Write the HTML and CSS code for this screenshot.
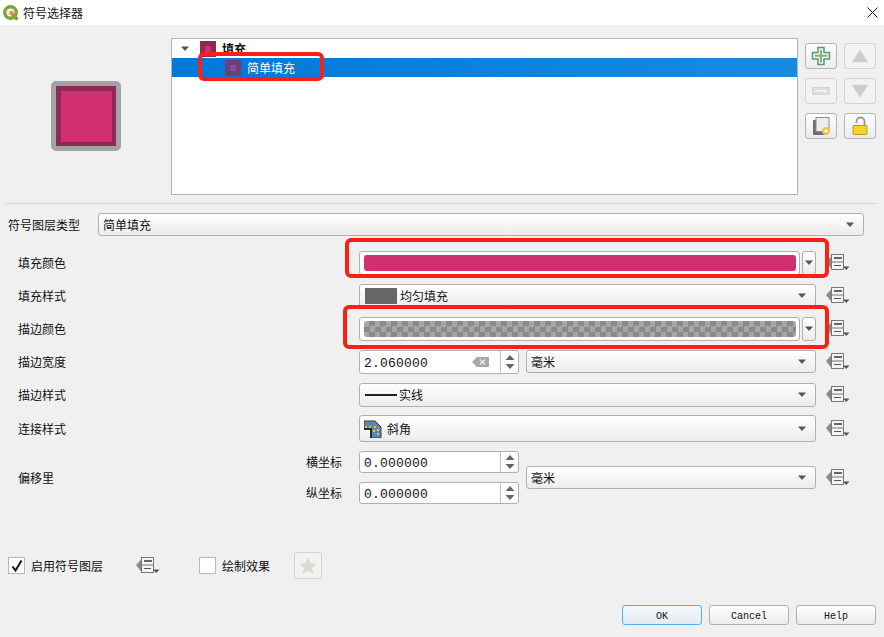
FILE: index.html
```html
<!DOCTYPE html>
<html lang="zh-CN">
<head>
<meta charset="utf-8">
<title>符号选择器</title>
<link rel="stylesheet" href="styles.css">
</head>
<body>
<svg class="defs" width="0" height="0">
  <defs>
    <symbol id="dd" viewBox="0 0 24 18">
      <path d="M0 8l5.500-6v13z" fill="#8a8a8a"/>
      <rect x="5.500" y="0.500" width="12" height="15" fill="#f4f4f4" stroke="#777"/>
      <rect x="8" y="3" width="8" height="2" fill="#666"/>
      <rect x="6" y="7.500" width="11" height="1" fill="#777"/>
      <rect x="8" y="11" width="7" height="1" fill="#555"/>
      <path d="M17 12.500h6.500l-3.250 3.500z" fill="#555"/>
    </symbol>
    <symbol id="arrow" viewBox="0 0 10 6">
      <path d="M1 0.500h8L5 5z" fill="#555"/>
    </symbol>
    <symbol id="spin" viewBox="0 0 10 16">
      <path d="M0.500 6 5 1l4.500 5z" fill="#666"/>
      <path d="M0.500 10h9L5 15z" fill="#666"/>
    </symbol>
    <symbol id="swatch" viewBox="0 0 16 16">
      <rect width="16" height="16" fill="currentColor"/>
      <rect x="5" y="5" width="6" height="6" fill="var(--core)"/>
    </symbol>
  </defs>
</svg>

<header class="titlebar">
  <svg class="qgis" width="18" height="18" viewBox="0 0 18 18">
    <circle cx="8.500" cy="8.500" r="5.800" fill="#f4f6e8" stroke="#7ea33a" stroke-width="3.400"/>
    <path d="M10.500 10.500l5 5" stroke="#7ea33a" stroke-width="3.400"/>
    <circle cx="9.500" cy="9" r="2.200" fill="#e88a3c"/>
  </svg>
  <span class="title">符号选择器</span>
  <svg class="close" width="11" height="11" viewBox="0 0 11 11"><path d="M0.500 0.500l10 10M10.500 0.500l-10 10" stroke="#111"/></svg>
</header>

<main class="dialog">
  <section class="top">
    <div class="preview"><div class="preview-symbol"><div class="preview-fill"></div></div></div>
    <div class="tree">
      <div class="tree-row">
        <svg class="twisty" width="10" height="6"><use href="#arrow"/></svg>
        <svg class="sw sw-root" width="16" height="16"><use href="#swatch"/></svg>
        <span class="bold">填充</span>
      </div>
      <div class="tree-row selected">
        <svg class="sw sw-child" width="16" height="16"><use href="#swatch"/></svg>
        <span>简单填充</span>
      </div>
    </div>
    <div class="side">
      <button class="tool">
        <svg width="20" height="20" viewBox="0 0 20 20"><path d="M7 1.500h6v5h5.500v6.500H13v5.500H7V13H1.500V6.500H7z" fill="#eef5ee" stroke="#5f9a68" stroke-width="1.500"/><path d="M10 4v12.500M4 9.750h12.500" stroke="#7fb086" stroke-width="2"/></svg>
      </button>
      <button class="tool off">
        <svg width="20" height="16" viewBox="0 0 20 16"><path d="M10 2l8 12H2z" fill="#c9ccce" stroke="#d8dadb"/></svg>
      </button>
      <button class="tool off">
        <svg width="20" height="10" viewBox="0 0 20 10"><rect x="1.500" y="1.500" width="17" height="7" fill="#e2dcdc" stroke="#d6d2d2"/><rect x="4" y="4" width="12" height="2" fill="#f2efef"/></svg>
      </button>
      <button class="tool off">
        <svg width="20" height="16" viewBox="0 0 20 16"><path d="M10 14L2 2h16z" fill="#c9ccce" stroke="#d8dadb"/></svg>
      </button>
      <button class="tool">
        <svg width="20" height="20" viewBox="0 0 20 20"><path d="M2 4v15h14V4z" fill="#6e6e6e"/><rect x="5" y="1.500" width="13" height="14" fill="#ededed" stroke="#8c8c8c"/><circle cx="15" cy="15" r="4" fill="#e9c84a"/><circle cx="15" cy="15" r="1.400" fill="#fff"/></svg>
      </button>
      <button class="tool">
        <svg width="20" height="20" viewBox="0 0 20 20"><path d="M6.500 7V5.500a4 4 0 0 1 8 0V10" fill="none" stroke="#999" stroke-width="1.800"/><rect x="3" y="9.500" width="14" height="9" rx="1" fill="#f5d327" stroke="#b59a18"/></svg>
      </button>
    </div>
  </section>

  <hr class="sep">

  <div class="type-row">
    <label class="type-label">符号图层类型</label>
    <div class="combo type-combo"><span>简单填充</span><svg class="caret" width="10" height="6"><use href="#arrow"/></svg></div>
  </div>

  <div class="form">
    <div class="row h24">
      <label>填充颜色</label>
      <div class="field color-field">
        <div class="color-btn"><div class="color-bar solid"></div></div>
        <div class="color-drop"><svg width="10" height="6"><use href="#arrow"/></svg></div>
      </div>
      <svg class="ddb" width="24" height="18"><use href="#dd"/></svg>
    </div>
    <div class="row h24">
      <label>填充样式</label>
      <div class="field combo">
        <span class="fill-swatch"></span><span>均匀填充</span>
        <svg class="caret" width="10" height="6"><use href="#arrow"/></svg>
      </div>
      <svg class="ddb" width="24" height="18"><use href="#dd"/></svg>
    </div>
    <div class="row h24">
      <label>描边颜色</label>
      <div class="field color-field">
        <div class="color-btn"><div class="color-bar checker"></div></div>
        <div class="color-drop"><svg width="10" height="6"><use href="#arrow"/></svg></div>
      </div>
      <svg class="ddb" width="24" height="18"><use href="#dd"/></svg>
    </div>
    <div class="row h24">
      <label>描边宽度</label>
      <div class="field split">
        <div class="spinbox">
          <span class="num">2.060000</span>
          <svg class="clear" width="17" height="12" viewBox="0 0 17 12"><path d="M0 6l4-4V1h13v10H4V10z" fill="#a8a8a8"/><path d="M8 3.500l5 5M13 3.500l-5 5" stroke="#ececec" stroke-width="1.300"/></svg>
          <span class="spin-btn"><svg width="10" height="16"><use href="#spin"/></svg></span>
        </div>
        <div class="combo unit"><span>毫米</span><svg class="caret" width="10" height="6"><use href="#arrow"/></svg></div>
      </div>
      <svg class="ddb" width="24" height="18"><use href="#dd"/></svg>
    </div>
    <div class="row h24">
      <label>描边样式</label>
      <div class="field combo">
        <span class="line-sample"></span><span>实线</span>
        <svg class="caret" width="10" height="6"><use href="#arrow"/></svg>
      </div>
      <svg class="ddb" width="24" height="18"><use href="#dd"/></svg>
    </div>
    <div class="row h27">
      <label>连接样式</label>
      <div class="field combo">
        <svg class="join-icon" width="18" height="18" viewBox="0 0 18 18"><path d="M0 1h11l6 6v11H7V9H0z" fill="#5f86ad" stroke="#2c3c4c"/><path d="M0 9h7v9" fill="none" stroke="#111" stroke-width="1.500"/><path d="M1 6h2v2H1zM5 6h2v2H5zM10 6h2v2h-2zM13 9h2v2h-2zM13 13h2v2h-2zM9 10h2v2H9z" fill="#e2c63a"/></svg>
        <span>斜角</span>
        <svg class="caret" width="10" height="6"><use href="#arrow"/></svg>
      </div>
      <svg class="ddb" width="24" height="18"><use href="#dd"/></svg>
    </div>
    <div class="row offset">
      <label>偏移里</label>
      <div class="offset-labels"><span>横坐标</span><span>纵坐标</span></div>
      <div class="field split center">
        <div class="offset-spins">
          <div class="spinbox short"><span class="num">0.000000</span><span class="spin-btn"><svg width="10" height="16"><use href="#spin"/></svg></span></div>
          <div class="spinbox short"><span class="num">0.000000</span><span class="spin-btn"><svg width="10" height="16"><use href="#spin"/></svg></span></div>
        </div>
        <div class="combo unit"><span>毫米</span><svg class="caret" width="10" height="6"><use href="#arrow"/></svg></div>
      </div>
      <svg class="ddb" width="24" height="18"><use href="#dd"/></svg>
    </div>
  </div>

  <div class="enable-row">
    <span class="check"><svg width="14" height="14" viewBox="0 0 14 14"><path d="M2.500 7.500l3 4 6-10" fill="none" stroke="#111" stroke-width="2"/></svg></span>
    <span class="enable-text">启用符号图层</span>
    <svg class="ddb-inline" width="24" height="18"><use href="#dd"/></svg>
    <span class="check"></span>
    <span class="effect-text">绘制效果</span>
    <button class="star-btn"><svg width="20" height="20" viewBox="0 0 20 20"><path d="M10 1.500l2.600 5.600 6 .7-4.500 4.100 1.200 6-5.300-3-5.300 3 1.200-6L1.400 7.800l6-.7z" fill="#dcdad2"/></svg></button>
  </div>

  <footer class="buttons">
    <button class="btn primary">OK</button>
    <button class="btn">Cancel</button>
    <button class="btn">Help</button>
  </footer>
</main>

<div class="mark mark-tree"></div>
<div class="mark mark-fill"></div>
<div class="mark mark-stroke"></div>
</body>
</html>
```

FILE: styles.css
```css
* { box-sizing: border-box; }
html, body { margin: 0; padding: 0; }
body {
  width: 884px;
  height: 637px;
  overflow: hidden;
  position: relative;
  background: #f0f0f0;
  color: #111;
  font-family: "Noto Sans CJK SC", "Liberation Sans", sans-serif;
  font-size: 12px;
  line-height: 16px;
}
.defs { position: absolute; }

/* title bar */
.titlebar {
  height: 25px;
  background: #fff;
  display: flex;
  align-items: center;
  padding-left: 2px;
}
.qgis { flex: none; }
.title { margin-left: 3px; font-size: 12px; }
.close { margin-left: auto; margin-right: 6px; }

/* top area */
.top {
  display: flex;
  padding-top: 13px;
  height: 170px;
}
.preview {
  width: 171px;
  height: 156px;
  padding: 43px 0 0 51px;
  flex: none;
}
.preview-symbol {
  width: 70px;
  height: 70px;
  border: 5px solid #a3a3a3;
  border-radius: 5px;
  background: #8f2a58;
  display: flex;
  align-items: center;
  justify-content: center;
}
.preview-fill { width: 51px; height: 51px; background: #d03072; }
.tree {
  width: 627px;
  height: 157px;
  background: #fff;
  border: 1px solid #b4b4b4;
  flex: none;
}
.tree-row {
  height: 19px;
  display: flex;
  align-items: center;
  position: relative;
  padding-left: 28px;
}
.twisty { position: absolute; left: 8px; top: 7px; }
.sw { flex: none; margin-right: 6px; }
.sw-root { color: #8f2a58; --core: #d03072; }
.sw-child { color: #6b3f7d; --core: #8b4a97; margin-left: 25px; }
.bold { font-weight: 700; }
.selected { background: linear-gradient(90deg, #0078d7, #1a8ae0); color: #fff; }
.side {
  display: grid;
  grid-template-columns: 32px 32px;
  grid-auto-rows: 26px;
  gap: 9px 7px;
  margin: 5px 0 0 7px;
}
.tool {
  padding: 0;
  display: flex;
  align-items: center;
  justify-content: center;
  border: 1px solid #b4b4b4;
  border-radius: 3px;
  background: linear-gradient(#fdfdfd, #ececec);
}
.tool.off { border-color: #d4d4d4; background: #f3f3f3; }

.sep { margin: 8px 6px 0 6px; border: 0; border-top: 1px solid #d8d8d8; height: 1px; }

/* symbol layer type */
.type-row {
  display: flex;
  align-items: center;
  height: 23px;
  margin-top: 9px;
  padding-left: 8px;
}
.type-label { width: 90px; }
.combo {
  display: flex;
  align-items: center;
  height: 100%;
  background: linear-gradient(#ffffff, #ececec);
  border: 1px solid #b0b0b0;
  border-radius: 3px;
  padding-left: 4px;
  position: relative;
}
.type-combo { width: 766px; }
.caret { position: absolute; right: 8px; top: 50%; margin-top: -3px; }

/* form */
.form {
  margin-top: 15px;
  padding-left: 18px;
  display: flex;
  flex-direction: column;
  gap: 9px;
}
.row { display: flex; align-items: center; }
.row > label { width: 341px; flex: none; }
.h24 { height: 24px; }
.h27 { height: 27px; margin-top: -1px; }
.field { width: 457px; height: 100%; flex: none; }
.ddb { margin-left: 10px; flex: none; }
.color-field { display: flex; gap: 2px; }
.color-btn {
  width: 441px;
  background: #fff;
  border: 1px solid #b0b0b0;
  border-radius: 3px;
  padding: 3px 3px 3px 4px;
}
.color-bar { height: 100%; border-radius: 3px; }
.solid { background: #d03072; }
.checker {
  background: conic-gradient(#8a8a8a 25%, #a6a6a6 0 50%, #8a8a8a 0 75%, #a6a6a6 0) 0 0 / 11px 11px;
}
.color-drop {
  width: 14px;
  background: linear-gradient(#fff, #ececec);
  border: 1px solid #b0b0b0;
  border-radius: 3px;
  display: flex;
  align-items: center;
  justify-content: center;
}
.fill-swatch { width: 32px; height: 16px; background: #666; margin: 0 3px 0 1px; }
.line-sample { width: 32px; height: 2px; background: #222; margin: 0 2px 0 1px; }
.join-icon { margin-right: 5px; }
.split { display: flex; gap: 7px; }
.center { align-items: center; }
.spinbox {
  width: 160px;
  height: 100%;
  display: flex;
  align-items: center;
  background: #fff;
  border: 1px solid #b0b0b0;
  border-radius: 3px;
  padding-left: 4px;
  position: relative;
}
.num { font-family: "Liberation Mono", monospace; font-size: 13px; letter-spacing: 0.2px; padding-top: 3px; }
.clear { position: absolute; right: 29px; top: 5px; }
.spin-btn {
  position: absolute;
  right: 0; top: 0; bottom: 0;
  width: 18px;
  border-left: 1px solid #c4c4c4;
  display: flex;
  align-items: center;
  justify-content: center;
}
.unit { width: 290px; height: 23px; }
.offset { height: 53px; }
.offset > label { width: 288px; }
.offset-labels {
  width: 53px;
  flex: none;
  display: flex;
  flex-direction: column;
  gap: 15px;
}
.offset-spins { display: flex; flex-direction: column; gap: 9px; }
.short { height: 22px; }

/* bottom */
.enable-row {
  display: flex;
  align-items: center;
  height: 27px;
  margin-top: 48px;
  padding-left: 8px;
}
.check {
  width: 17px;
  height: 17px;
  background: #fff;
  border: 1px solid #b8b8b8;
  display: flex;
  align-items: center;
  justify-content: center;
  flex: none;
}
.enable-text { margin-left: 6px; width: 72px; flex: none; }
.ddb-inline { margin: 0 0 0 33px; flex: none; }
.ddb-inline + .check { margin-left: 39px; }
.effect-text { margin-left: 6px; width: 48px; flex: none; }
.star-btn {
  margin-left: 24px;
  width: 28px;
  height: 27px;
  padding: 0;
  display: flex;
  align-items: center;
  justify-content: center;
  background: #f2f2f2;
  border: 1px solid #d4d4d4;
  border-radius: 3px;
}
.buttons {
  display: flex;
  justify-content: flex-end;
  gap: 7px;
  margin-top: 26px;
  padding-right: 8px;
}
.btn {
  width: 80px;
  height: 20px;
  padding: 2px 0 0;
  font-family: "Liberation Mono", monospace;
  font-size: 10px;
  color: #111;
  background: linear-gradient(#ffffff, #ececec);
  border: 1px solid #b0b0b0;
  border-radius: 3px;
}
.primary { background: linear-gradient(#f4f8fb, #e4ebf1); border-color: #4fb0f5; }

/* red annotations drawn over the dialog */
.mark {
  position: absolute;
  border: 4px solid #fb2015;
  border-radius: 6px;
}
.mark-tree { left: 198px; top: 52px; width: 126px; height: 29px; }
.mark-fill { left: 345px; top: 238px; width: 484px; height: 40px; }
.mark-stroke { left: 343px; top: 305px; width: 486px; height: 44px; }
```
